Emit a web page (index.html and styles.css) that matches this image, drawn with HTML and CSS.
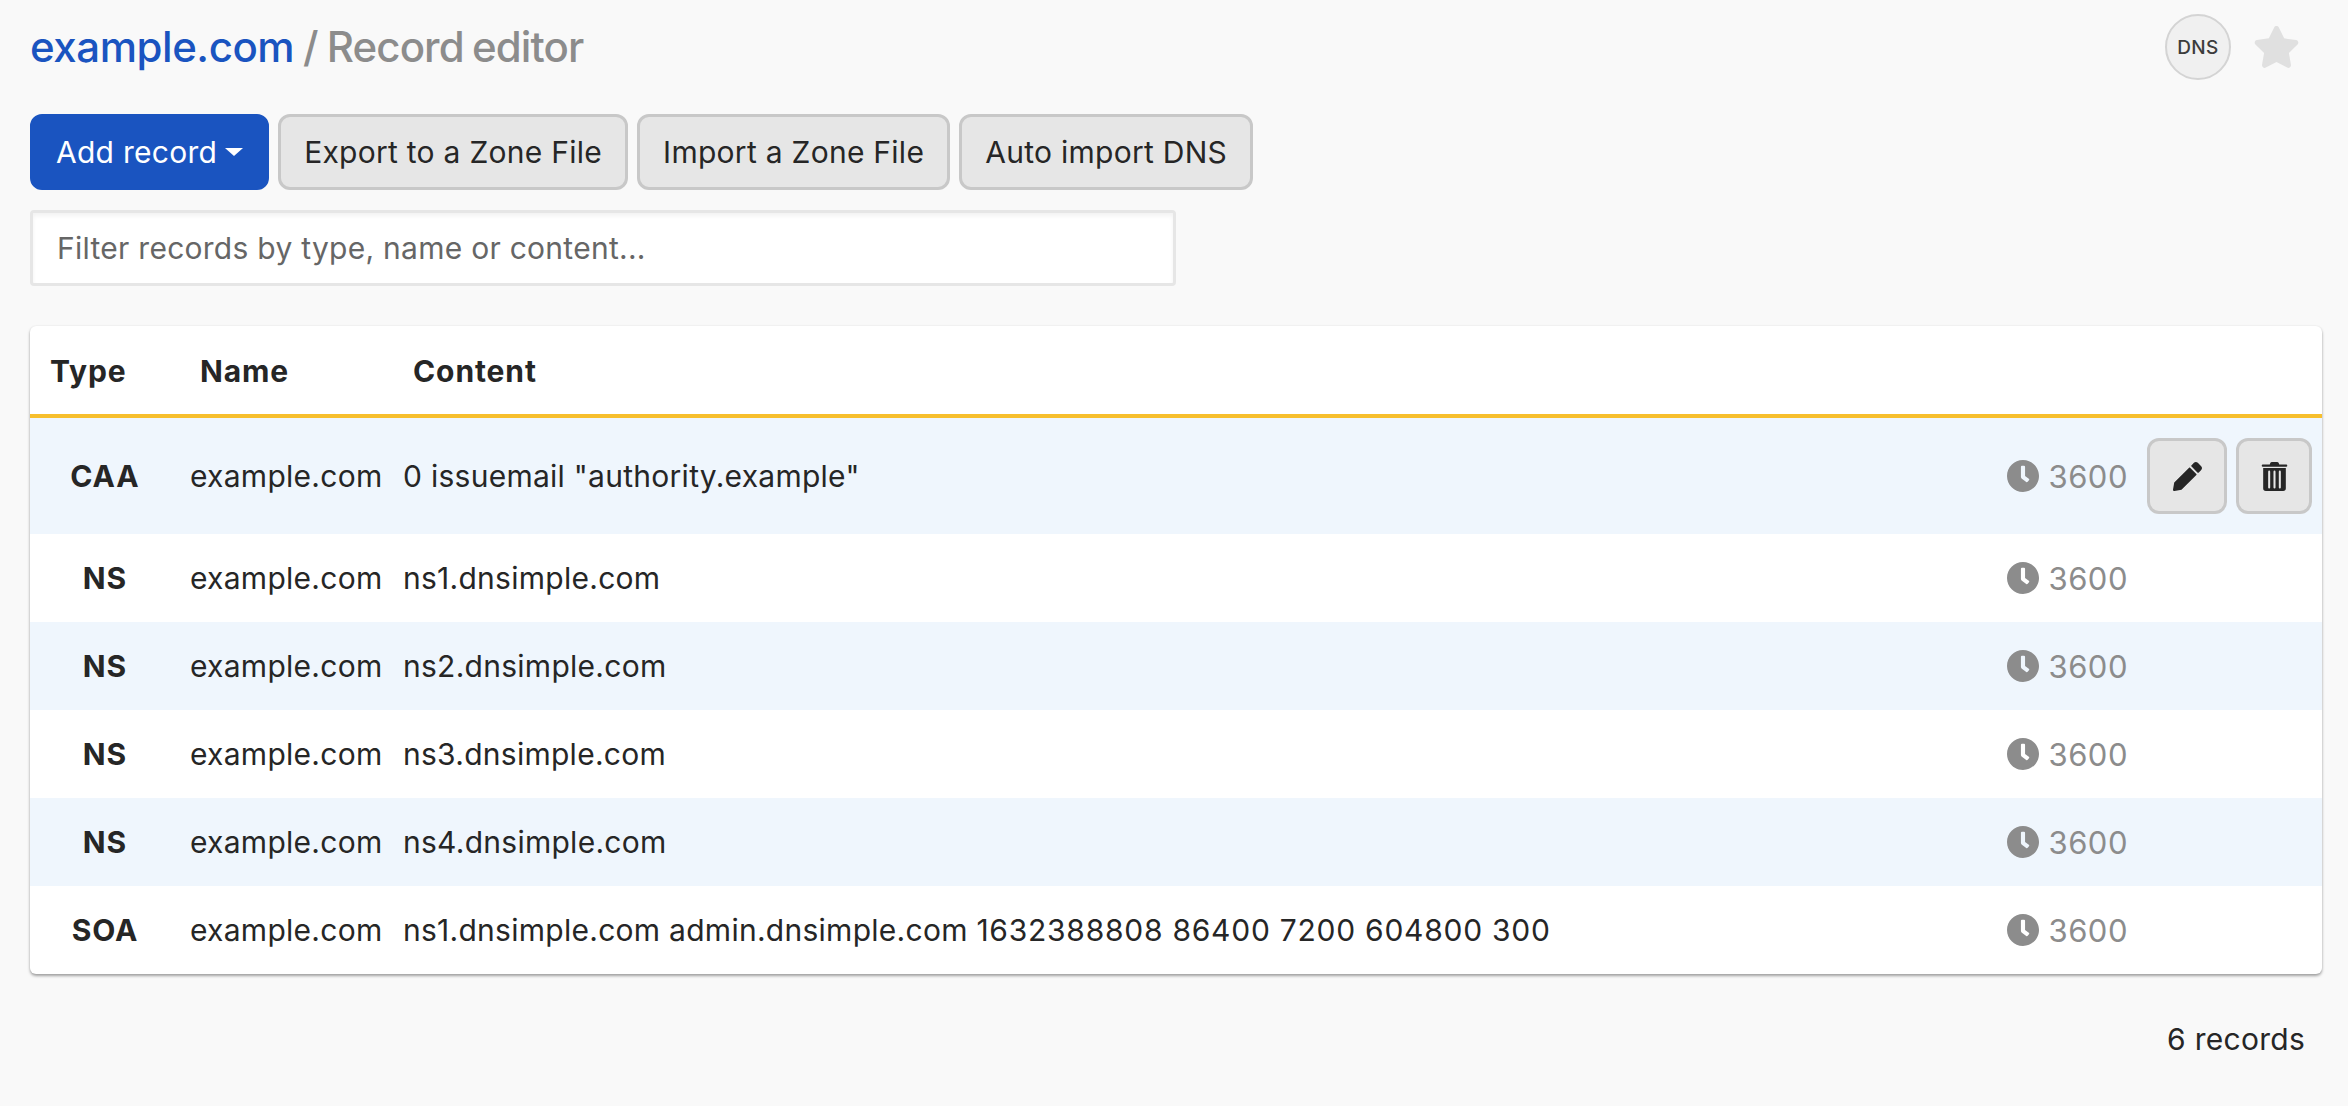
FILE: index.html
```html
<!DOCTYPE html>
<html lang="en">
<head>
    <meta charset="UTF-8">
    <meta name="viewport" content="width=device-width, initial-scale=1.0">
    <title>Record editor</title>
    <link rel="stylesheet" href="styles.css">
</head>
<body>
    <svg class="icon-defs" width="0" height="0">
        <symbol id="icon-clock" viewBox="8 8 496 496"><path d="M256,8C119,8,8,119,8,256S119,504,256,504,504,393,504,256,393,8,256,8Zm92.49,313h0l-20,25a16,16,0,0,1-22.49,2.5h0l-67-49.72a40,40,0,0,1-15-31.23V112a16,16,0,0,1,16-16h32a16,16,0,0,1,16,16V256l58,42.5A16,16,0,0,1,348.49,321Z"/></symbol>
    </svg>

    <header class="page-head">
        <h1 class="title"><a href="#" class="title-link">example.com</a> / <span class="title-page">Record editor</span></h1>
        <div class="head-side">
            <span class="badge">DNS</span>
            <svg class="star" viewBox="0 0 576 512"><path d="M259.3 17.8L194 150.2 47.9 171.5c-26.2 3.8-36.7 36.1-17.7 54.6l105.7 103-25 145.5c-4.5 26.3 23.2 46 46.4 33.7L288 439.6l130.7 68.7c23.2 12.2 50.9-7.4 46.4-33.7l-25-145.5 105.7-103c19-18.5 8.5-50.8-17.7-54.6L382 150.2 316.7 17.8c-11.7-23.6-45.6-23.9-57.4 0z"/></svg>
        </div>
    </header>

    <div class="toolbar">
        <button class="btn btn-primary">Add record<span class="caret"></span></button>
        <button class="btn">Export to a Zone File</button>
        <button class="btn">Import a Zone File</button>
        <button class="btn">Auto import DNS</button>
    </div>

    <input class="filter" type="text" placeholder="Filter records by type, name or content...">

    <div class="card">
        <table class="records">
            <thead>
                <tr>
                    <th class="col-type">Type</th>
                    <th class="col-name">Name</th>
                    <th>Content</th>
                    <th class="col-ttl"></th>
                    <th class="col-actions"></th>
                </tr>
            </thead>
            <tbody>
                <tr>
                    <td class="cell-type">CAA</td>
                    <td>example.com</td>
                    <td>0 issuemail "authority.example"</td>
                    <td class="cell-ttl"><svg class="clock"><use href="#icon-clock"/></svg>3600</td>
                    <td class="cell-actions">
                        <div class="actions">
                            <button class="btn btn-icon btn-edit">
                                <svg viewBox="0 0 512 512"><path d="M497.9 142.1l-46.1 46.1c-4.7 4.7-12.3 4.7-17 0l-111-111c-4.7-4.7-4.7-12.3 0-17l46.1-46.1c18.7-18.7 49.1-18.7 67.9 0l60.1 60.1c18.8 18.7 18.8 49.1 0 67.9zM284.2 99.8L21.6 362.4.4 483.9c-2.9 16.4 11.4 30.6 27.8 27.8l121.5-21.3 262.6-262.6c4.7-4.7 4.7-12.3 0-17l-111-111c-4.8-4.7-12.4-4.7-17.1 0z"/></svg>
                            </button>
                            <button class="btn btn-icon btn-trash">
                                <svg viewBox="0 0 448 512"><path d="M24 108h400v356a48 48 0 0 1-48 48H72a48 48 0 0 1-48-48zm88 62v282a18 18 0 0 0 36 0V170a18 18 0 0 0-36 0zm94 0v282a18 18 0 0 0 36 0V170a18 18 0 0 0-36 0zm94 0v282a18 18 0 0 0 36 0V170a18 18 0 0 0-36 0zM18 46h122l8-22A34 34 0 0 1 180 0h88a34 34 0 0 1 32 24l8 22h122a18 18 0 0 1 0 40H18a18 18 0 0 1 0-40z"/></svg>
                            </button>
                        </div>
                    </td>
                </tr>
                <tr>
                    <td class="cell-type">NS</td>
                    <td>example.com</td>
                    <td>ns1.dnsimple.com</td>
                    <td class="cell-ttl"><svg class="clock"><use href="#icon-clock"/></svg>3600</td>
                    <td></td>
                </tr>
                <tr>
                    <td class="cell-type">NS</td>
                    <td>example.com</td>
                    <td>ns2.dnsimple.com</td>
                    <td class="cell-ttl"><svg class="clock"><use href="#icon-clock"/></svg>3600</td>
                    <td></td>
                </tr>
                <tr>
                    <td class="cell-type">NS</td>
                    <td>example.com</td>
                    <td>ns3.dnsimple.com</td>
                    <td class="cell-ttl"><svg class="clock"><use href="#icon-clock"/></svg>3600</td>
                    <td></td>
                </tr>
                <tr>
                    <td class="cell-type">NS</td>
                    <td>example.com</td>
                    <td>ns4.dnsimple.com</td>
                    <td class="cell-ttl"><svg class="clock"><use href="#icon-clock"/></svg>3600</td>
                    <td></td>
                </tr>
                <tr>
                    <td class="cell-type">SOA</td>
                    <td>example.com</td>
                    <td>ns1.dnsimple.com admin.dnsimple.com <span class="serial">1632388808 86400 7200 604800 300</span></td>
                    <td class="cell-ttl"><svg class="clock"><use href="#icon-clock"/></svg>3600</td>
                    <td></td>
                </tr>
            </tbody>
        </table>
    </div>

    <p class="count">6 records</p>
</body>
</html>
```

FILE: styles.css
```css
* {
    box-sizing: border-box;
}
html, body {
    height: 100%;
}
body {
    font-family: Inter, "Liberation Sans", Arial, sans-serif;
    font-size: 30px;
    line-height: 45px;
    letter-spacing: 0.27px;
    color: #262626;
    background-color: #f9f9f9;
    margin: 0;
    padding: 14px 26px 0 30px;
}
.icon-defs {
    position: absolute;
}
.page-head {
    display: flex;
    justify-content: space-between;
    align-items: center;
    height: 66px;
}
.title {
    margin: 0;
    font-size: 42px;
    line-height: 66px;
    font-weight: 500;
    letter-spacing: -0.45px;
    word-spacing: -2px;
    color: #8c8c8c;
}
.title-link {
    color: #1a54c0;
    text-decoration: none;
}
.title-page {
    letter-spacing: -0.9px;
}
.head-side {
    display: flex;
    align-items: center;
    gap: 22px;
    padding-right: 22px;
}
.badge {
    width: 66px;
    height: 66px;
    border-radius: 50%;
    border: 2px solid #d4d4d4;
    background-color: #f0f0f0;
    color: #3c3c3c;
    font-size: 19px;
    font-weight: 500;
    letter-spacing: 0.4px;
    display: flex;
    align-items: center;
    justify-content: center;
}
.star {
    width: 47px;
    height: 42px;
    fill: #e0e0e0;
}
.toolbar {
    display: flex;
    gap: 9px;
    margin-top: 34px;
}
.btn {
    font-family: inherit;
    font-size: 30px;
    line-height: 45px;
    letter-spacing: inherit;
    height: 76px;
    padding: 0 23px;
    color: #262626;
    background-color: #e6e6e6;
    border: 3px solid #c8c8c8;
    border-radius: 12px;
    cursor: pointer;
}
.btn-primary {
    color: #fff;
    background-color: #1a54c0;
    border-color: #1a54c0;
}
.caret {
    display: inline-block;
    margin-left: 8px;
    vertical-align: 7px;
    border-top: 8px solid #fff;
    border-left: 9px solid transparent;
    border-right: 9px solid transparent;
}
.filter {
    display: block;
    width: 1146px;
    height: 76px;
    margin-top: 20px;
    padding: 0 24px;
    font-family: inherit;
    font-size: 30px;
    letter-spacing: inherit;
    color: #262626;
    background-color: #fff;
    border: 3px solid #e6e6e6;
    border-radius: 4px;
    box-shadow: inset 0 3px 4px rgba(0, 0, 0, 0.05);
}
.filter::placeholder {
    color: #666;
    opacity: 1;
}
.card {
    margin-top: 40px;
    background-color: #fff;
    border-radius: 6px;
    overflow: hidden;
    box-shadow: 0 2px 3px rgba(0, 0, 0, 0.35), 0 0 2px rgba(0, 0, 0, 0.08);
}
.records {
    width: 100%;
    border-collapse: separate;
    border-spacing: 0;
    table-layout: fixed;
}
.records th {
    height: 92px;
    padding: 2px 0 0 20px;
    text-align: left;
    font-weight: 700;
    letter-spacing: 0.9px;
    border-bottom: 4px solid #f7bf2d;
}
.records td {
    height: 88px;
    padding: 0 0 0 10px;
    white-space: nowrap;
}
.records tbody tr:nth-child(odd) {
    background-color: #eff6fd;
}
.records tbody tr:first-child td {
    height: 116px;
}
.col-type {
    width: 150px;
}
.col-name {
    width: 213px;
}
.col-ttl {
    width: 150px;
}
.col-actions {
    width: 185px;
}
.records .cell-type {
    padding: 0;
    text-align: center;
    font-weight: 700;
    letter-spacing: 0.9px;
}
.serial {
    letter-spacing: 0.75px;
}
.records .cell-ttl {
    padding: 0 9px 0 0;
    text-align: right;
    font-size: 31px;
    letter-spacing: 0.5px;
    color: #8c8c8c;
}
.clock {
    width: 32px;
    height: 32px;
    margin-right: 10px;
    vertical-align: -4px;
    fill: #8c8c8c;
}
.records .cell-actions {
    padding: 0 10px;
}
.actions {
    display: flex;
    justify-content: flex-end;
    gap: 9px;
}
.btn-icon {
    padding: 0;
    display: flex;
    align-items: center;
    justify-content: center;
}
.btn-edit {
    width: 80px;
}
.btn-trash {
    width: 76px;
}
.btn-icon svg {
    width: 29px;
    height: 29px;
    fill: #262626;
}
.count {
    margin: 43px 17px 0 0;
    text-align: right;
}
```
